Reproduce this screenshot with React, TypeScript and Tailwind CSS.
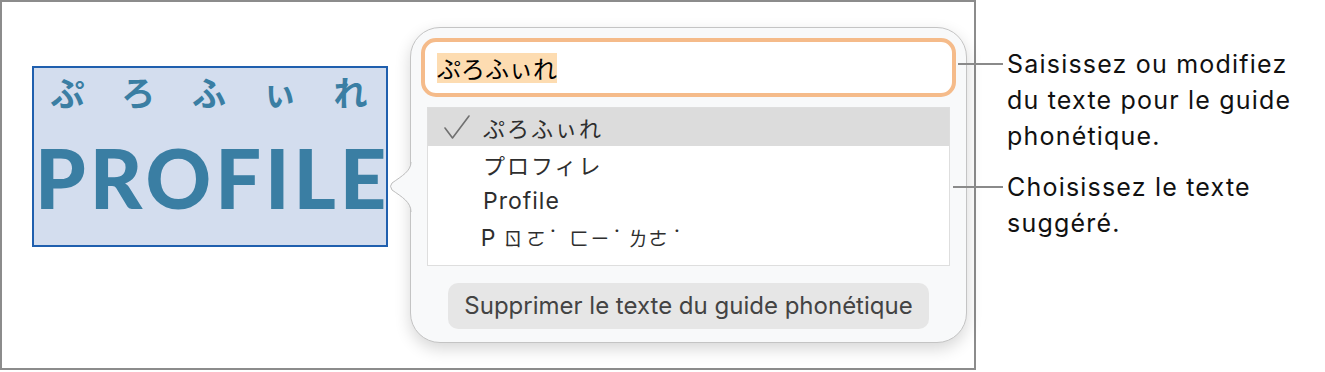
import React from "react";

const ui = { fontFamily: 'Inter, "Noto Sans CJK JP", sans-serif' };
const jp = { fontFamily: '"Noto Sans CJK JP", sans-serif' };
const tc = { fontFamily: '"Noto Sans CJK TC", sans-serif' };

// [glyph, margin class (distance from previous glyph centre), isToneMark]
const bopo: [string, string, boolean][] = [
  ["P", "ml-[60px]", false],
  ["ㄖ", "ml-[25px]", false],
  ["ㄛ", "ml-[23px]", false],
  ["˙", "ml-[17px]", true],
  ["ㄈ", "ml-[26px]", false],
  ["ㄧ", "ml-[21px]", false],
  ["˙", "ml-[17px]", true],
  ["ㄌ", "ml-[21px]", false],
  ["ㄜ", "ml-[20px]", false],
  ["˙", "ml-[19px]", true],
];

export default function App() {
  return (
    <div className="relative flex w-[1325px] h-[372px] bg-white overflow-hidden" style={ui}>
      {/* Frame */}
      <div className="relative flex items-start w-[976px] h-[370px] border-2 border-[#8c8c8c] bg-white pl-[30px] shrink-0">
        {/* Selected text box */}
        <div className="mt-[64px] w-[356px] h-[181px] border-2 border-[#1f5fae] bg-[#d3ddee] flex flex-col shrink-0">
          <div
            className="grid grid-cols-5 text-[34px] font-bold text-[#3a7ea3] leading-none mt-[7px] ml-[-2px]"
            style={jp}
          >
            <span className="text-center">ぷ</span>
            <span className="text-center">ろ</span>
            <span className="text-center">ふ</span>
            <span className="text-center">ぃ</span>
            <span className="text-center">れ</span>
          </div>
          <div
            className="text-[81px] font-black text-[#3a7ea3] leading-none mt-[28px] ml-[1px] tracking-[4px]"
            style={{ fontFamily: "Lato, sans-serif" }}
          >
            PROFILE
          </div>
        </div>

        {/* Popover */}
        <div className="relative mt-[25px] ml-[22px] w-[557px] h-[316px] rounded-[30px] border border-[#c4c4c4] bg-[#f8f9fa] shadow-[0_6px_16px_rgba(0,0,0,0.16)] px-[10px] pt-[10px] flex flex-col shrink-0">
          {/* Arrow */}
          <svg
            className="absolute left-[-23px] top-[134px]"
            width="26"
            height="50"
            viewBox="0 0 26 50"
          >
            <path d="M23 0 C23 9, 14 14, 4 21 Q1 24 4 28 C14 35, 23 40, 23 50 L26 50 L26 0 Z" fill="#f8f9fa" />
            <path d="M23 0 C23 9, 14 14, 4 21 Q1 24 4 28 C14 35, 23 40, 23 50" fill="none" stroke="#bdbdbd" strokeWidth="1" />
          </svg>

          {/* Text field with focus ring */}
          <div className="h-[59px] rounded-[15px] border-[4px] border-[#f5bb8a] bg-white flex items-center px-[12px]">
            <span className="bg-[#fddcb1] text-[24px] leading-[30px] text-black" style={jp}>
              ぷろふぃれ
            </span>
          </div>

          {/* Suggestions list */}
          <div className="mt-[10px] mx-[6px] h-[159px] border border-[#dedede] bg-white flex flex-col">
            <div className="h-[38px] bg-[#dcdcdc] flex items-center">
              <svg className="ml-[15px]" width="28" height="26" viewBox="0 0 28 26">
                <path d="M2 14 L9.5 24 L26 2" fill="none" stroke="#707070" strokeWidth="1.6" strokeLinecap="round" strokeLinejoin="round" />
              </svg>
              <span className="ml-[12px] text-[22px] text-[#2e2e2e] tracking-[2px]" style={jp}>
                ぷろふぃれ
              </span>
            </div>
            <div className="h-[37px] flex items-center pl-[55px] text-[22px] text-[#2e2e2e] tracking-[2px]" style={jp}>
              プロフィレ
            </div>
            <div className="h-[37px] flex items-center pl-[55px] text-[23px] tracking-[1px] text-[#2e2e2e]">Profile</div>
            <div className="h-[37px] flex items-center text-[19px] text-[#2e2e2e]" style={tc}>
              {bopo.map(([c, ml, tone], i) => (
                <span
                  key={i}
                  className={`w-0 flex justify-center whitespace-nowrap ${ml}`}
                  style={tone || c === "P" ? ui : undefined}
                >
                  <span className={c === "P" ? "text-[23px]" : tone ? "text-[22px]" : ""}>{c}</span>
                </span>
              ))}
            </div>
          </div>

          {/* Button */}
          <div className="mt-[17px] mx-[27px] h-[46px] rounded-[10px] bg-[#e6e6e6] flex items-center justify-center text-[24px] text-[#434343]">
            Supprimer le texte du guide phonétique
          </div>
        </div>
      </div>

      {/* Callout lines */}
      <div className="absolute left-[958px] top-[63px] w-[45px] h-[2px] bg-[#8a8a8a]" />
      <div className="absolute left-[953px] top-[186px] w-[50px] h-[2px] bg-[#8a8a8a]" />

      {/* Callout texts */}
      <div className="ml-[31px] pt-[46px] text-[25px] leading-[36px] tracking-[1.2px] text-[#111]">
        <div>
          <div>Saisissez ou modifiez</div>
          <div>du texte pour le guide</div>
          <div>phonétique.</div>
        </div>
        <div className="mt-[15px]">
          <div>Choisissez le texte</div>
          <div>suggéré.</div>
        </div>
      </div>
    </div>
  );
}
